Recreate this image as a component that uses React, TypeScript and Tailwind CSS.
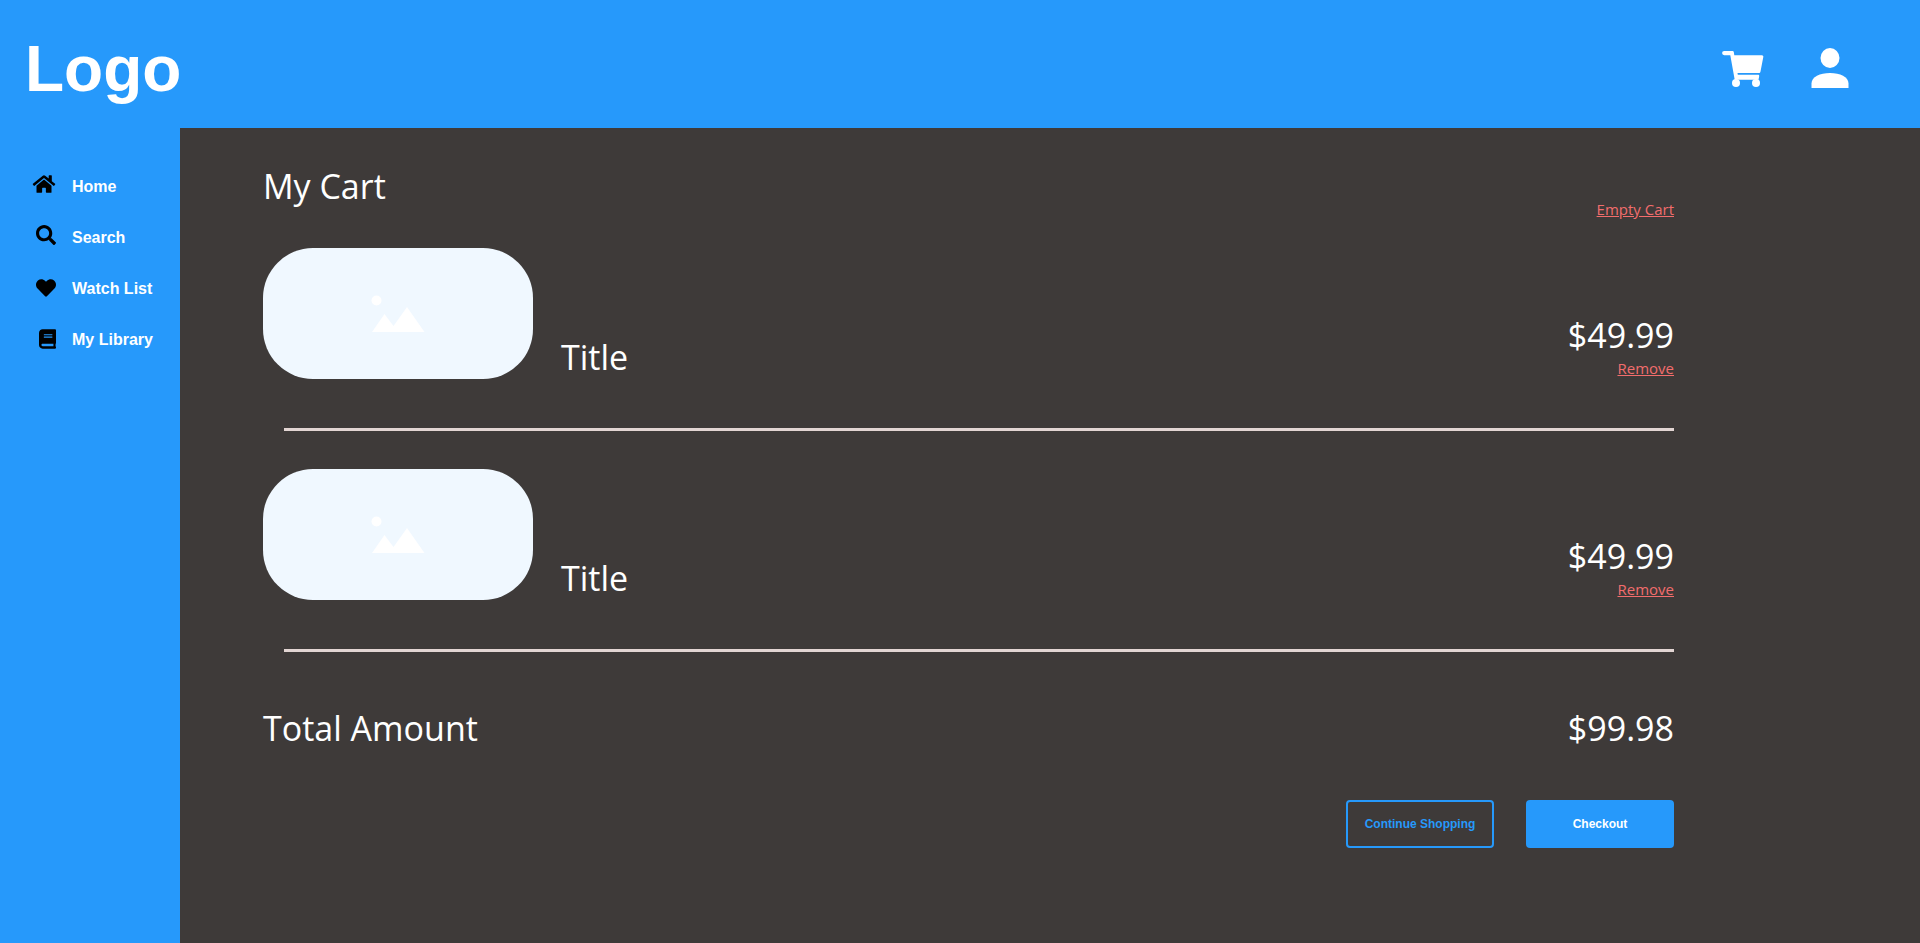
import { FaBook, FaHeart, FaHome, FaSearch } from "react-icons/fa";
import type { ReactNode } from "react";

const navItems: { label: string; icon: ReactNode }[] = [
  { label: "Home", icon: <FaHome className="h-5 w-6" /> },
  { label: "Search", icon: <FaSearch className="h-5 w-5" /> },
  { label: "Watch List", icon: <FaHeart className="mt-0.5 h-5 w-5" /> },
  { label: "My Library", icon: <FaBook className="mt-0.5 h-5 w-[17px]" /> },
];

const cartItems = [
  { id: 1, title: "Title", price: "$49.99" },
  { id: 2, title: "Title", price: "$49.99" },
];

function CartIcon() {
  return (
    <svg viewBox="0 0 42 38" className="h-[38px] w-[42px]" fill="currentColor" aria-hidden="true">
      <path d="M2.200 1h8c1 0 1.500.5 1.700 1.400L12.300 5.200h27.500c1.200 0 1.700.7 1.500 1.800L38.500 21.500c-.2 1-.8 1.500-1.700 1.500H15.500l.3 1.700H36c1 0 1.400.6 1.200 1.500l-.7 3.500H12.700L8.300 5.200H2.200a2.100 2.100 0 0 1 0-4.200Z" />
      <circle cx="14" cy="33" r="4" />
      <circle cx="34" cy="33" r="4" />
    </svg>
  );
}

function PersonIcon() {
  return (
    <svg viewBox="0 0 38 40" className="h-10 w-[38px]" fill="currentColor" aria-hidden="true">
      <ellipse cx="19" cy="10" rx="9.500" ry="10" />
      <path d="M.5 40v-4.500C.5 29 9 25 19 25s18.500 4 18.500 10.500V40Z" />
    </svg>
  );
}

function Thumbnail() {
  return (
    <div className="flex h-[131px] w-[270px] shrink-0 items-center justify-center rounded-[50px] bg-[#f0f8ff]">
      <svg viewBox="0 0 54 38" className="h-[38px] w-[54px]" fill="white" aria-hidden="true">
        <circle cx="5.500" cy="5.500" r="5" />
        <path d="M1 37 13.500 19 22.500 31 36 12 53.500 37Z" />
      </svg>
    </div>
  );
}

export default function App() {
  return (
    <div className="flex min-h-screen flex-col bg-[#3e3a39] font-['Open_Sans','Segoe_UI',sans-serif] text-white">
      <header className="flex h-32 items-center justify-between bg-[#2699fb] pr-[71px] pl-[25px]">
        <a href="#home" className="pt-2.5 font-['Liberation_Sans',Arial,sans-serif] text-[64px] leading-[72px] font-bold">
          Logo
        </a>
        <div className="flex items-end gap-[47px] pt-2">
          <button type="button" aria-label="Cart">
            <CartIcon />
          </button>
          <button type="button" aria-label="Account">
            <PersonIcon />
          </button>
        </div>
      </header>

      <div className="flex flex-1">
        <nav className="w-[180px] shrink-0 bg-[#2699fb] pt-[46px] font-['Liberation_Sans',Arial,sans-serif]">
          <ul className="flex flex-col gap-[25px]">
            {navItems.map((item) => (
              <li key={item.label}>
                <a href="#" className="flex h-[26px] items-center gap-4 text-base leading-6 font-bold">
                  <span className="flex w-14 justify-end self-start text-black">{item.icon}</span>
                  {item.label}
                </a>
              </li>
            ))}
          </ul>
        </nav>

        <main className="flex-1 pt-[35px] pr-[246px] pb-12 pl-[83px]">
          <div className="flex h-[57px] items-end justify-between">
            <h1 className="self-start text-[34px] leading-[46px]">My Cart</h1>
            <button type="button" className="text-[15px] leading-[22px] text-[#f26d6d] underline">
              Empty Cart
            </button>
          </div>

          <ul className="mt-7 flex flex-col gap-[38px]">
            {cartItems.map((item) => (
              <li key={item.id}>
                <div className="flex items-end">
                  <Thumbnail />
                  <h2 className="ml-7 flex-1 text-[34px] leading-[44px]">{item.title}</h2>
                  <div className="flex flex-col items-end">
                    <span className="text-[34px] leading-[44px]">{item.price}</span>
                    <button type="button" className="text-[15px] leading-[22px] text-[#f26d6d] underline">
                      Remove
                    </button>
                  </div>
                </div>
                <hr className="mt-[49px] ml-[21px] h-[3px] border-0 bg-[#e2d5d3]" />
              </li>
            ))}
          </ul>

          <div className="mt-[53px] flex items-end justify-between text-[34px] leading-[46px]">
            <span>Total Amount</span>
            <span>$99.98</span>
          </div>

          <div className="mt-[49px] flex justify-end gap-8 font-['Liberation_Sans',Arial,sans-serif] text-xs font-bold">
            <button type="button" className="h-12 w-[148px] rounded border-2 border-[#2699fb] text-[#2699fb]">
              Continue Shopping
            </button>
            <button type="button" className="h-12 w-[148px] rounded bg-[#2699fb]">
              Checkout
            </button>
          </div>
        </main>
      </div>
    </div>
  );
}
